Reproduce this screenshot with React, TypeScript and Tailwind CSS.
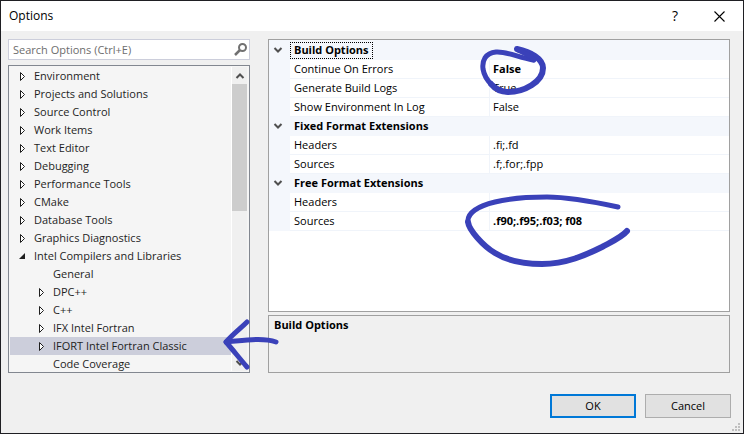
import React, { useState } from "react";

type TreeNode = { label: string; level: 0 | 1; state: "closed" | "open" | "leaf" };

const nodes: TreeNode[] = [
  { label: "Environment", level: 0, state: "closed" },
  { label: "Projects and Solutions", level: 0, state: "closed" },
  { label: "Source Control", level: 0, state: "closed" },
  { label: "Work Items", level: 0, state: "closed" },
  { label: "Text Editor", level: 0, state: "closed" },
  { label: "Debugging", level: 0, state: "closed" },
  { label: "Performance Tools", level: 0, state: "closed" },
  { label: "CMake", level: 0, state: "closed" },
  { label: "Database Tools", level: 0, state: "closed" },
  { label: "Graphics Diagnostics", level: 0, state: "closed" },
  { label: "Intel Compilers and Libraries", level: 0, state: "open" },
  { label: "General", level: 1, state: "leaf" },
  { label: "DPC++", level: 1, state: "closed" },
  { label: "C++", level: 1, state: "closed" },
  { label: "IFX Intel Fortran", level: 1, state: "closed" },
  { label: "IFORT Intel Fortran Classic", level: 1, state: "closed" },
  { label: "Code Coverage", level: 1, state: "leaf" },
];

type Category = { title: string; rows: { name: string; value: string; changed?: boolean }[] };

const categories: Category[] = [
  {
    title: "Build Options",
    rows: [
      { name: "Continue On Errors", value: "False", changed: true },
      { name: "Generate Build Logs", value: "True" },
      { name: "Show Environment In Log", value: "False" },
    ],
  },
  {
    title: "Fixed Format Extensions",
    rows: [
      { name: "Headers", value: ".fi;.fd" },
      { name: "Sources", value: ".f;.for;.fpp" },
    ],
  },
  {
    title: "Free Format Extensions",
    rows: [
      { name: "Headers", value: "" },
      { name: "Sources", value: ".f90;.f95;.f03; f08", changed: true },
    ],
  },
];

function Expander({ state }: { state: TreeNode["state"] }) {
  return (
    <svg width="10" height="10" viewBox="0 0 10 10" className="shrink-0" aria-hidden="true">
      {state === "closed" && <path d="M2.5 1.5v8l4-4z" fill="#fff" stroke="#1e1e1e" />}
      {state === "open" && <path d="M7 2v6H1z" fill="#1e1e1e" />}
    </svg>
  );
}

function Chevron({ up = false }: { up?: boolean }) {
  return (
    <svg width="10" height="8" viewBox="0 0 10 8" aria-hidden="true">
      <path d={up ? "M1.5 6L5 2.5 8.5 6" : "M1.5 2L5 5.5 8.5 2"} fill="none" stroke="#505050" strokeWidth="2" />
    </svg>
  );
}

function OptionTree() {
  const [selected, setSelected] = useState("IFORT Intel Fortran Classic");
  return (
    <div className="flex h-[308px] overflow-hidden border border-[#828790] bg-[#f5f5f5] p-px">
      <ul role="tree" aria-label="Option pages" className="min-w-0 flex-1">
        {nodes.map((n) => (
          <li
            key={n.label}
            role="treeitem"
            aria-selected={n.label === selected}
            onClick={() => setSelected(n.label)}
            className={`flex h-[18px] items-center gap-1.5 whitespace-nowrap text-[#1e1e1e] ${
              n.level === 1 ? "pl-[27px]" : "pl-2"
            } ${n.label === selected ? "bg-[#cccedb]" : ""}`}
          >
            <Expander state={n.state} />
            <span>{n.label}</span>
          </li>
        ))}
      </ul>
      <div className="mr-px flex w-4 flex-col border-l border-white bg-[#f0f0f0]">
        <button type="button" aria-label="Scroll up" className="flex h-[17px] items-center justify-center">
          <Chevron up />
        </button>
        <div className="h-[127px] bg-[#cdcdcd]" />
        <div className="flex-1" />
        <button type="button" aria-label="Scroll down" className="flex h-[17px] items-center justify-center">
          <Chevron />
        </button>
      </div>
    </div>
  );
}

function PropertyGrid() {
  return (
    <div className="h-[273px] border border-[#a0a0a0] bg-white">
      <table className="w-full table-fixed border-separate border-spacing-0 text-left text-black">
        <colgroup>
          <col className="w-[21px]" />
          <col className="w-[200px]" />
          <col />
        </colgroup>
        {categories.map((c, i) => (
          <tbody key={c.title}>
            <tr className={`bg-[#f4f7fc] ${i === 0 ? "h-5" : "h-[19px] align-top"}`}>
              <td className="p-0">
                <button
                  type="button"
                  aria-label={`Collapse ${c.title}`}
                  className="flex h-[18px] w-[18px] items-center justify-center"
                >
                  <Chevron />
                </button>
              </td>
              <th colSpan={2} scope="colgroup" className="p-0 font-bold">
                <span
                  className={`flex h-[17px] w-fit items-center border px-[3px] ${
                    i === 0 ? "border-dotted border-black" : "border-transparent"
                  }`}
                >
                  {c.title}
                </span>
              </th>
            </tr>
            {c.rows.map((r) => (
              <tr key={r.name} className="h-[19px]">
                <td className="bg-[#f4f7fc] p-0" />
                <th
                  scope="row"
                  className="border-r border-b border-[#f0f4fa] py-0 pr-0 pl-1 font-normal leading-[18px]"
                >
                  {r.name}
                </th>
                <td
                  className={`border-b border-[#f0f4fa] py-0 pr-0 pl-[3px] leading-[18px] ${r.changed ? "font-bold" : ""}`}
                >
                  {r.value}
                </td>
              </tr>
            ))}
          </tbody>
        ))}
      </table>
    </div>
  );
}

function PenMarks() {
  return (
    <svg
      width="744"
      height="434"
      viewBox="0 0 744 434"
      className="pointer-events-none absolute -top-px -left-px"
      fill="none"
      stroke="#3a41b9"
      strokeWidth="5"
      strokeLinecap="round"
      strokeLinejoin="round"
      aria-hidden="true"
    >
      <path d="M247 322C240 329 234 333 226 342C233 350 240 359 247 367" />
      <path d="M226 342C240 341 262 337 276 342" />
      <path d="M533 60C518 57 505 51 496 52C485 53 482 61 483 69C485 81 496 91 508 92" />
      <path d="M517 49C531 52 543 59 543 68C543 82 524 92 508 92C501 92 495 89 491 84" strokeWidth="6" />
      <path d="M518 50C524 53 530 55 534 60" strokeWidth="5" />
      <path d="M618 207C595 202 565 197 547 197C530 197 507 199 495 202C478 206 467 213 468 222" />
      <path d="M468 222C469 230 483 246 495 253C508 261 522 264 542 264C566 264 586 255 602 247C613 241 622 237 627 231" strokeWidth="6" />
    </svg>
  );
}

export default function App() {
  return (
    <div className="relative flex min-h-screen flex-col border border-[#1f1f23] bg-[#f0f0f0] font-['Open_Sans','Noto_Sans',sans-serif] text-[11px] leading-[18px]">
      <header className="flex h-[30px] items-center bg-white pr-[18px] pl-2 text-black">
        <h1 className="flex-1 text-[12px]">Options</h1>
        <button type="button" aria-label="Help" className="mr-[33px] w-3 text-[14px]">
          ?
        </button>
        <button type="button" aria-label="Close">
          <svg width="11" height="11" viewBox="0 0 11 11" aria-hidden="true">
            <path d="M.5.5l10 10M10.5.5l-10 10" stroke="#000" strokeWidth="1.1" fill="none" />
          </svg>
        </button>
      </header>

      <main className="flex gap-[18px] pt-2 pr-[13px] pl-[7px]">
        <div className="flex w-[242px] shrink-0 flex-col gap-[5px]">
          <label className="flex h-[21px] items-center border border-[#cccedb] bg-white pr-0.5 pl-1">
            <input
              type="text"
              aria-label="Search Options"
              placeholder="Search Options (Ctrl+E)"
              className="min-w-0 flex-1 bg-transparent outline-none placeholder:text-[#6d6d6d]"
            />
            <svg width="13" height="13" viewBox="0 0 13 13" fill="none" stroke="#717171" aria-hidden="true">
              <circle cx="8.5" cy="4.5" r="3.5" strokeWidth="2" />
              <path d="M6 7L1 12" strokeWidth="2.5" />
            </svg>
          </label>
          <OptionTree />
        </div>
        <div className="flex min-w-0 flex-1 flex-col gap-[3px]">
          <PropertyGrid />
          <section className="flex-1 border border-[#a0a0a0] px-[5px] font-bold text-black">
            <h2>Build Options</h2>
          </section>
        </div>
      </main>

      <footer className="flex justify-end gap-[9px] pt-[21px] pr-3 pb-[15px] text-black">
        <button type="button" className="h-6 w-[86px] border-2 border-[#0078d7] bg-[#e1e1e1] leading-5">
          OK
        </button>
        <button type="button" className="h-6 w-[86px] border border-[#adadad] bg-[#e1e1e1] leading-[22px]">
          Cancel
        </button>
      </footer>

      <svg width="8" height="8" viewBox="0 0 8 8" className="absolute right-[3px] bottom-0.5" fill="#bfbfbf" aria-hidden="true">
        <path d="M6 0h2v2h-2zM3 3h2v2h-2zM6 3h2v2h-2zM0 6h2v2h-2zM3 6h2v2h-2zM6 6h2v2h-2z" />
      </svg>
      <PenMarks />
    </div>
  );
}
